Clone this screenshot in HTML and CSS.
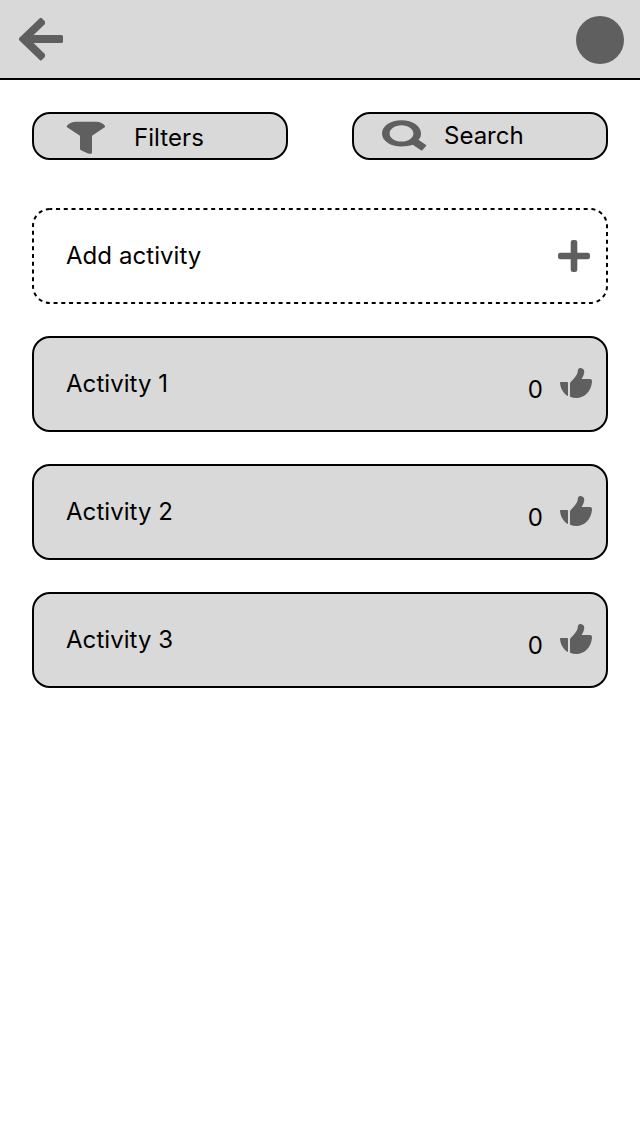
FILE: index.html
```html
<!DOCTYPE html>
<html lang="en">
<head>
<meta charset="utf-8">
<title>Activities</title>
<link rel="stylesheet" href="styles.css">
</head>
<body>
<svg class="defs" width="0" height="0" aria-hidden="true">
  <symbol id="thumb" viewBox="0 0 32 32">
    <path d="M0 14.800Q0 14 .8 14H7.200Q8 14 8 14.800V27.200Q8 28.300 7.200 27.700C3.500 25.200 .5 21 0 14.800Z"/>
    <path d="M10 15.500Q10 14.600 10.700 13.900C13.500 11.300 15.500 8.800 16.800 6.500Q17.600 5 17.800 3C18 .8 19 -.1 20.700 .1C23.300.4 24.500 2 24.200 4.400C23.900 6.800 22.700 8.900 21.700 11H29.500C31.300 11 32.200 12 32 13.800C31.200 23.500 24.500 30 16.200 30C14 30 12.200 29.700 10.800 29.100Q10 28.800 10 28Z"/>
  </symbol>
</svg>
<header class="topbar">
  <svg class="back" width="44" height="44" viewBox="0 0 44 44"><path d="M21.800 1.300L24.500 4V5.500L13 16.500L11.500 18.500H42.500V23.500H11.500L13 25.500L24.500 36.800V38.300L21.800 41L1.500 21.500V20.800Z"/></svg>
  <div class="avatar"></div>
</header>
<main class="content">
  <div class="tools">
    <button class="tool filter">
      <svg class="icon" width="40" height="34" viewBox="0 0 40 34"><path d="M10 .7H30C34 .7 37.500 2.300 39 5Q39.500 5.600 38.700 6.200L26 14.800V31.800Q26 32.800 24.500 32.800Q23 32.800 21.500 32.200L15.500 29.500Q14 28.800 14 28V14.800L1.100 6.200Q.3 5.600 .8 5C2.500 2.300 6 .7 10 .7Z"/></svg>
      <span>Filters</span>
    </button>
    <button class="tool search">
      <svg class="icon" width="46" height="32" viewBox="0 0 46 32"><path fill-rule="evenodd" d="M19.500 .3C30.500 .3 39 6 39 13.400C39 15.800 38.200 17.900 36.500 19.800L44 24.900Q44.600 25.400 44 26L40.300 30.200Q39.700 30.700 39 30.200L30.700 24.800C27.500 26 23.500 26.500 19.500 26.500C8.500 26.500 0 20.700 0 13.400S8.500 .3 19.500 .3ZM19.500 5.200C12.700 5.200 7.600 8.900 7.600 13.400S12.700 21.500 19.500 21.500S31.400 17.900 31.400 13.400S26.300 5.200 19.500 5.200Z"/></svg>
      <span>Search</span>
    </button>
  </div>
  <div class="list">
    <div class="card add">
      <svg class="outline" width="576" height="96" viewBox="0 0 576 96"><rect x="1" y="1" width="574" height="94" rx="17"/></svg>
      <span class="name">Add activity</span>
      <svg class="icon plus" width="32" height="32" viewBox="0 0 32 32"><path d="M15 0H17Q19.300 0 19.300 2.300V12.700H29.700Q32 12.700 32 15V17Q32 19.300 29.700 19.300H19.300V29.700Q19.300 32 17 32H15Q12.700 32 12.700 29.700V19.300H2.300Q0 19.300 0 17V15Q0 12.700 2.300 12.700H12.700V2.300Q12.700 0 15 0Z"/></svg>
    </div>
    <div class="card">
      <span class="name">Activity 1</span><span class="votes">0</span>
      <svg class="icon thumb" width="32" height="32"><use href="#thumb"/></svg>
    </div>
    <div class="card">
      <span class="name">Activity 2</span><span class="votes">0</span>
      <svg class="icon thumb" width="32" height="32"><use href="#thumb"/></svg>
    </div>
    <div class="card">
      <span class="name">Activity 3</span><span class="votes">0</span>
      <svg class="icon thumb" width="32" height="32"><use href="#thumb"/></svg>
    </div>
  </div>
</main>
</body>
</html>
```
FILE: styles.css
```css
* { box-sizing: border-box; }
body {
  margin: 0;
  min-height: 1136px;
  background: #fff;
  color: #000;
  font: 400 24px/29px Inter, sans-serif;
  letter-spacing: 0.06px;
}
.defs { display: block; height: 0; }
.topbar {
  width: 640px;
  height: 80px;
  padding: 0 16px 0 19px;
  display: flex;
  align-items: center;
  justify-content: space-between;
  background: #d9d9d9;
  border-bottom: 2px solid #000;
}
.back {
  margin-top: 2px;
  overflow: visible;
  fill: #5f5f5f;
  stroke: #5f5f5f;
  stroke-width: 3;
  stroke-linejoin: round;
}
.avatar { width: 48px; height: 48px; margin-top: 2px; border-radius: 50%; background: #5f5f5f; }
.content { width: 640px; padding: 32px; }
.tools { display: flex; gap: 64px; margin-bottom: 48px; }
.tool {
  width: 256px;
  height: 48px;
  display: flex;
  align-items: center;
  border: 2px solid #000;
  border-radius: 18px;
  background: #d9d9d9;
  color: #000;
  font: inherit;
  letter-spacing: inherit;
}
.filter { gap: 28px; padding: 3px 0 0 32px; }
.search { gap: 16px; padding: 0 0 1px 28px; letter-spacing: 0; }
.icon { flex: none; fill: #5f5f5f; }
.list { display: flex; flex-direction: column; gap: 32px; }
.card {
  height: 96px;
  display: flex;
  align-items: center;
  padding: 0 14px 2px 32px;
  border: 2px solid #000;
  border-radius: 18px;
  background: #d9d9d9;
}
.name { flex: 1; }
.votes { margin: 12px 17px 0 0; }
.thumb { margin-top: 2px; }
.add { position: relative; border-color: transparent; background: none; padding-right: 16px; }
.plus { margin-top: 2px; }
.outline {
  position: absolute;
  left: -2px;
  top: -2px;
  fill: none;
  stroke: #000;
  stroke-width: 2;
  stroke-dasharray: 4 3.76;
  stroke-dashoffset: 1.76;
}
```
